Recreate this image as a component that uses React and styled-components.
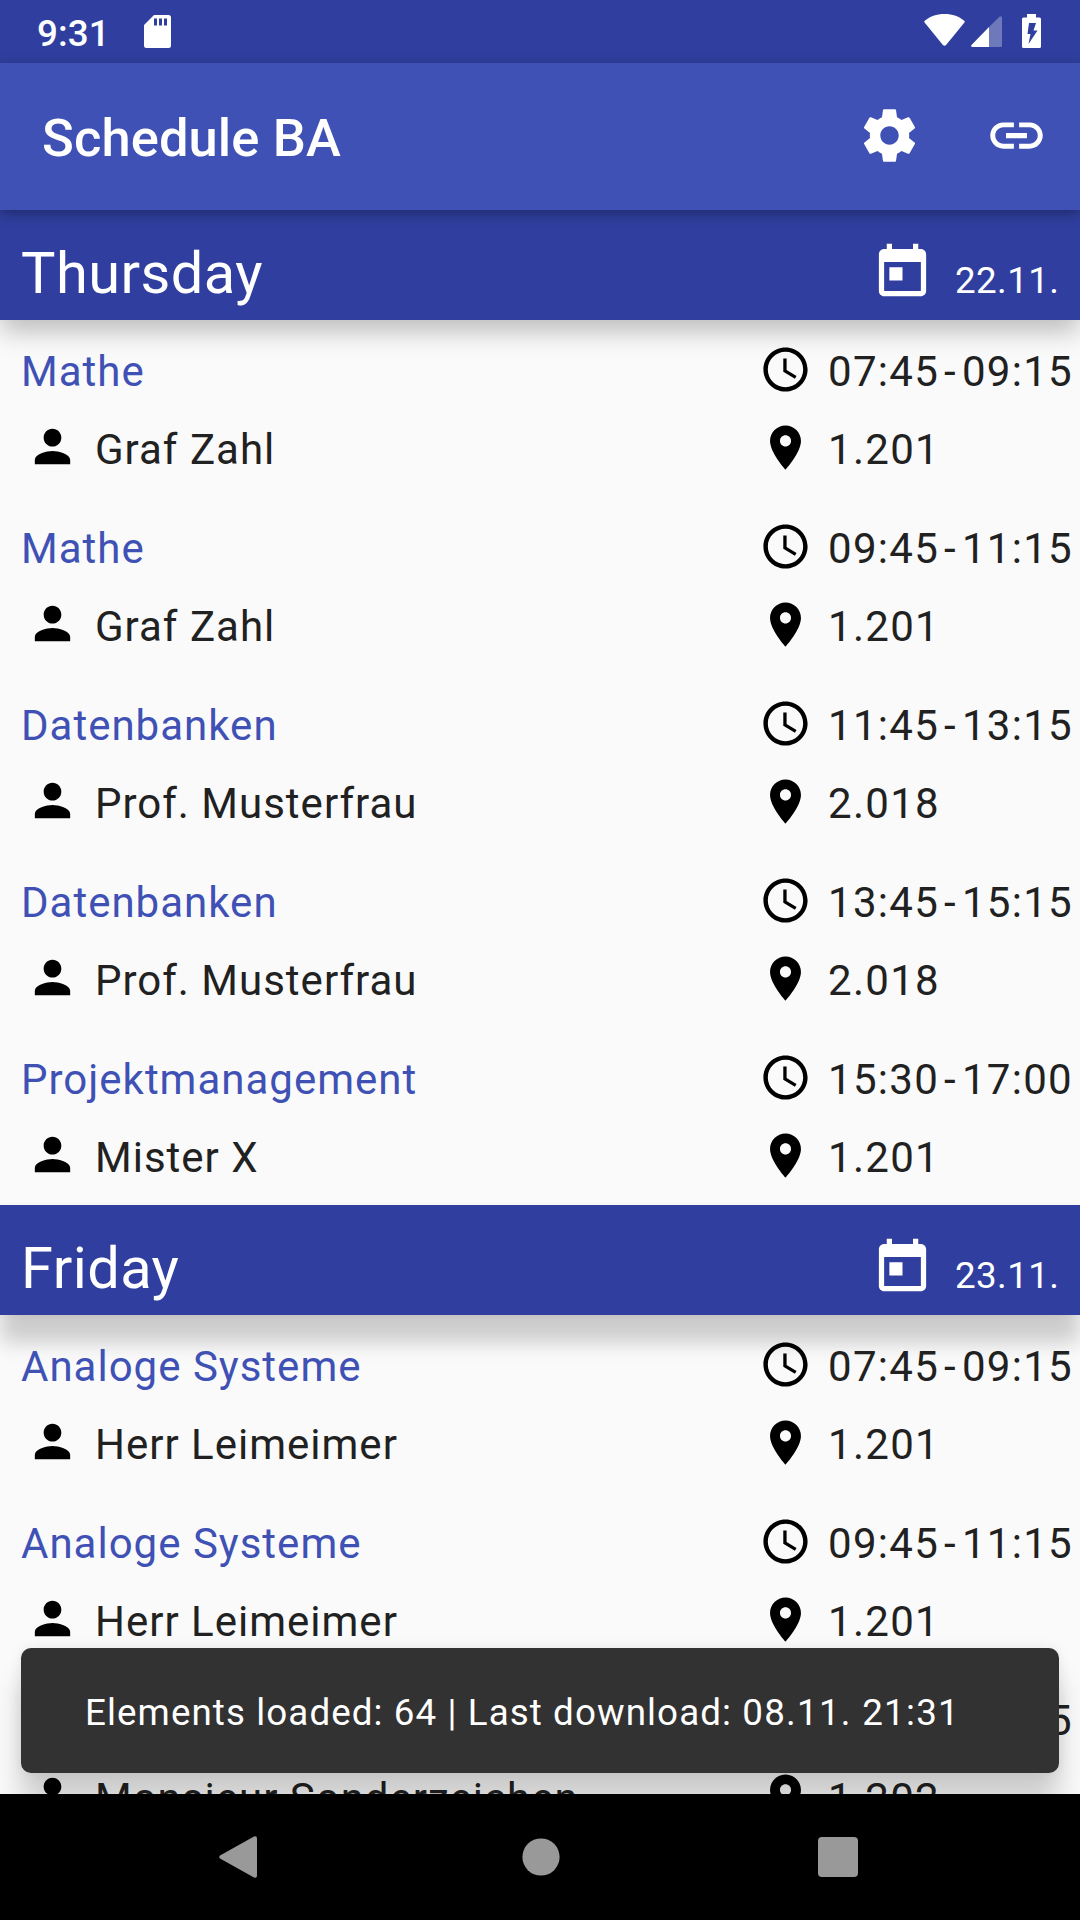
import React from 'react';
import styled, { createGlobalStyle } from 'styled-components';

const GlobalStyle = createGlobalStyle`
  *, *::before, *::after { box-sizing: border-box; }
  html, body { margin: 0; padding: 0; background: #000; }
  body { font-family: Roboto, "Noto Sans", sans-serif; }
`;

const Screen = styled.div`
  position: relative;
  display: flex;
  flex-direction: column;
  width: 1080px;
  height: 1920px;
  overflow: hidden;
  background: #fafafa;
`;

const StatusBar = styled.header`
  display: flex;
  align-items: flex-start;
  flex: 0 0 63px;
  height: 63px;
  padding: 0 39px 0 37px;
  background: #303f9f;
  color: #fff;
`;

const Clock = styled.span`
  flex: 1;
  display: flex;
  align-items: flex-start;
  gap: 34px;
  font-size: 36.75px;
  font-weight: 500;
  letter-spacing: 0.1px;
`;

const Time = styled.span`
  margin-top: 12px;
  line-height: 44px;
`;

const StatusIcons = styled.div`
  display: flex;
  align-items: flex-start;
  height: 34px;
  margin-top: 14px;
`;

const Glyph = styled.svg`
  display: block;
  flex: none;
  width: ${(p) => p.$w}px;
  height: ${(p) => p.$h || p.$w}px;
  margin-left: ${(p) => p.$left || 0}px;
  margin-top: ${(p) => p.$top || 0}px;
  fill: currentColor;
`;

const Toolbar = styled.nav`
  position: relative;
  z-index: 2;
  display: flex;
  align-items: center;
  flex: 0 0 147px;
  padding: 0 32px 0 42px;
  background: #3f51b5;
  color: #fff;
  box-shadow: 0 4px 12px rgba(0, 0, 0, 0.32);
`;

const Title = styled.h1`
  flex: 1;
  margin: 3.5px 0 0;
  font-size: 52.5px;
  line-height: 62px;
  font-weight: 500;
  letter-spacing: 0.1px;
`;

const Actions = styled.div`
  display: flex;
  gap: 64px;
  margin-bottom: 2px;
`;

const List = styled.main`
  flex: 1 1 0;
  min-height: 0;
  overflow: hidden;
`;

const DayHeader = styled.div`
  position: relative;
  display: flex;
  align-items: flex-start;
  height: 110px;
  padding: 0 21px;
  background: #303f9f;
  color: #fff;
  box-shadow: ${(p) => p.$shadow};
`;

const DayName = styled.h2`
  flex: 1;
  margin: 29px 0 0;
  font-size: 57.75px;
  line-height: 68px;
  font-weight: 400;
  letter-spacing: 0.45px;
`;

const DayDate = styled.span`
  width: 104px;
  margin: 49px 0 0 21px;
  font-size: 36.75px;
  line-height: 44px;
  letter-spacing: 0.4px;
  white-space: nowrap;
`;

const Lesson = styled.article`
  position: relative;
  display: grid;
  grid-template-columns: 1fr 321px;
  grid-template-rows: 78px 99px;
  height: 177px;
  font-size: 42px;
  line-height: 50px;
  letter-spacing: 1px;
  color: #212121;
  white-space: nowrap;
`;

const Subject = styled.div`
  padding: 27px 0 0 21px;
  color: #3f51b5;
`;

const Cell = styled.div`
  display: flex;
  align-items: flex-start;
  padding-left: ${(p) => p.$indent || 0}px;
`;

const CellIcon = styled(Glyph)`
  color: #000;
`;

const Label = styled.span`
  display: flex;
  margin: 27px 0 0 16px;
`;

const Figures = styled(Label)`
  letter-spacing: 1.29px;
`;

const Dash = styled.span`
  padding: 0 5px;
`;

const Snackbar = styled.div`
  position: absolute;
  z-index: 3;
  left: 21px;
  top: 1648px;
  display: flex;
  align-items: center;
  width: 1038px;
  height: 125px;
  padding: 3px 64px 0;
  border-radius: 10px;
  background: #323232;
  color: #fff;
  font-size: 36.75px;
  letter-spacing: 1.09px;
  white-space: pre;
  box-shadow: 0 31px 28px rgba(0, 0, 0, 0.18), 0 0 14px rgba(0, 0, 0, 0.08);
`;

const Stamp = styled.span`
  letter-spacing: 1.26px;
`;

const NavBar = styled.footer`
  position: relative;
  z-index: 4;
  display: flex;
  align-items: center;
  flex: 0 0 126px;
  padding-left: 219px;
  background: #000;
  color: #999;
`;

const PATHS = {
  settings:
    'M19.43 12.98c.04-.32.07-.64.07-.98s-.03-.66-.07-.98l2.11-1.65c.19-.15.24-.42.12-.64l-2-3.46c-.12-.22-.39-.3-.61-.22l-2.49 1c-.52-.4-1.08-.73-1.69-.98l-.38-2.65C14.46 2.18 14.25 2 14 2h-4c-.25 0-.46.18-.49.42l-.38 2.65c-.61.25-1.17.59-1.69.98l-2.49-1c-.23-.09-.49 0-.61.22l-2 3.46c-.13.22-.07.49.12.64l2.11 1.65c-.04.32-.07.65-.07.98s.03.66.07.98l-2.11 1.65c-.19.15-.24.42-.12.64l2 3.46c.12.22.39.3.61.22l2.49-1c.52.4 1.08.73 1.69.98l.38 2.65c.03.24.24.42.49.42h4c.25 0 .46-.18.49-.42l.38-2.65c.61-.25 1.17-.59 1.69-.98l2.49 1c.23.09.49 0 .61-.22l2-3.46c.12-.22.07-.49-.12-.64l-2.11-1.65zM12 15.5c-1.93 0-3.5-1.57-3.5-3.5s1.57-3.5 3.5-3.5 3.5 1.57 3.5 3.5-1.57 3.5-3.5 3.5z',
  link: 'M3.9 12c0-1.71 1.39-3.1 3.1-3.1h4V7H7c-2.76 0-5 2.24-5 5s2.24 5 5 5h4v-1.9H7c-1.71 0-3.1-1.39-3.1-3.1zM8 13h8v-2H8v2zm9-6h-4v1.9h4c1.71 0 3.1 1.39 3.1 3.1s-1.39 3.1-3.1 3.1h-4V17h4c2.76 0 5-2.24 5-5s-2.24-5-5-5z',
  today:
    'M19 3h-1V1h-2v2H8V1H6v2H5c-1.11 0-1.99.9-1.99 2L3 19c0 1.1.89 2 2 2h14c1.1 0 2-.9 2-2V5c0-1.1-.9-2-2-2zm0 16H5V8h14v11zM7 10h5v5H7z',
  clock:
    'M11.99 2C6.47 2 2 6.48 2 12s4.47 10 9.99 10C17.52 22 22 17.52 22 12S17.52 2 11.99 2zM12 20c-4.42 0-8-3.58-8-8s3.58-8 8-8 8 3.58 8 8-3.58 8-8 8zm.5-13H11v6l5.25 3.15.75-1.23-4.5-2.67z',
  place:
    'M12 2C8.13 2 5 5.13 5 9c0 5.25 7 13 7 13s7-7.75 7-13c0-3.87-3.13-7-7-7zm0 9.5c-1.38 0-2.5-1.12-2.5-2.5s1.12-2.5 2.5-2.5 2.5 1.12 2.5 2.5-1.12 2.5-2.5 2.5z',
  person:
    'M12 12c2.21 0 4-1.79 4-4s-1.79-4-4-4-4 1.79-4 4 1.79 4 4 4zm0 2c-2.67 0-8 1.34-8 4v2h16v-2c0-2.66-5.33-4-8-4z',
};

const Icon = ({ name, as: Base = Glyph, ...rest }) => (
  <Base viewBox="0 0 24 24" {...rest}>
    <path d={PATHS[name]} />
  </Base>
);

const DAYS = [
  {
    name: 'Thursday',
    date: '22.11.',
    shadow: '0 12px 24px -1px rgba(0, 0, 0, 0.25)',
    lessons: [
      ['Mathe', 'Graf Zahl', '07:45', '09:15', '1.201'],
      ['Mathe', 'Graf Zahl', '09:45', '11:15', '1.201'],
      ['Datenbanken', 'Prof. Musterfrau', '11:45', '13:15', '2.018'],
      ['Datenbanken', 'Prof. Musterfrau', '13:45', '15:15', '2.018'],
      ['Projektmanagement', 'Mister X', '15:30', '17:00', '1.201'],
    ],
  },
  {
    name: 'Friday',
    date: '23.11.',
    shadow: '0 28px 20px -1px rgba(0, 0, 0, 0.19), 0 1px 8px rgba(0, 0, 0, 0.04)',
    lessons: [
      ['Analoge Systeme', 'Herr Leimeimer', '07:45', '09:15', '1.201'],
      ['Analoge Systeme', 'Herr Leimeimer', '09:45', '11:15', '1.201'],
      ['', 'Monsieur Sonderzeichen', '11:45', '13:15', '1.202'],
    ],
  },
];

const LessonRow = ({ lesson: [subject, teacher, from, to, room] }) => (
  <Lesson>
    <Subject>{subject}</Subject>
    <Cell>
      <Icon as={CellIcon} name="clock" $w={53} $top={23} />
      <Figures>
        {from}
        <Dash>-</Dash>
        {to}
      </Figures>
    </Cell>
    <Cell $indent={26}>
      <Icon as={CellIcon} name="person" $w={53} $top={22} />
      <Label>{teacher}</Label>
    </Cell>
    <Cell>
      <Icon as={CellIcon} name="place" $w={53} $top={23} />
      <Figures>{room}</Figures>
    </Cell>
  </Lesson>
);

export default function App() {
  return (
    <>
      <GlobalStyle />
      <Screen>
        <StatusBar>
          <Clock>
            <Time>9:31</Time>
            <Glyph viewBox="0 0 27 33" $w={27} $h={33} $top={15}>
              <path
                fillRule="evenodd"
                d="M10 0H24.500Q27 0 27 2.500V30.500Q27 33 24.500 33H2.500Q0 33 0 30.500V10ZM10 3.500V10.500H13V3.500ZM15 3.500V10.500H18V3.500ZM20 3.500V10.500H23V3.500Z"
              />
            </Glyph>
          </Clock>
          <StatusIcons>
            <Glyph viewBox="0 0 41 32" $w={41} $h={32}>
              <path d="M20.500 0C12.600 0 5.600 2.600.500 7Q0 7.800.600 8.600L18.900 31Q20.500 32.400 22.100 31L40.400 8.600Q41 7.800 40.500 7C35.400 2.600 28.400 0 20.500 0Z" />
            </Glyph>
            <Glyph viewBox="0 0 31 31" $w={31} $h={31} $left={6} $top={2}>
              <path
                opacity="0.3"
                d="M18 11L28.500.700Q31-.800 31 2V29.500Q31 31 29.500 31H18Z"
              />
              <path d="M18 11V31H1Q-.500 30.500.500 29Z" />
            </Glyph>
            <Glyph viewBox="0 0 19 34" $w={19} $h={34} $left={20}>
              <path
                fillRule="evenodd"
                d="M5 0H14V3.500H17.500Q19 3.500 19 5V32.500Q19 34 17.500 34H1.500Q0 34 0 32.500V5Q0 3.500 1.500 3.500H5ZM7 9L5.500 20H8.500L6.500 30L15.500 16.500H11.500L14 9Z"
              />
            </Glyph>
          </StatusIcons>
        </StatusBar>
        <Toolbar>
          <Title>Schedule BA</Title>
          <Actions>
            <Icon name="settings" $w={63} />
            <Icon name="link" $w={63} />
          </Actions>
        </Toolbar>
        <List>
          {DAYS.map((day) => (
            <section key={day.name}>
              <DayHeader $shadow={day.shadow}>
                <DayName>{day.name}</DayName>
                <Icon name="today" $w={63} $top={31} />
                <DayDate>{day.date}</DayDate>
              </DayHeader>
              {day.lessons.map((lesson) => (
                <LessonRow key={lesson[2]} lesson={lesson} />
              ))}
            </section>
          ))}
        </List>
        <Snackbar>
          {'Elements loaded: 64 | Last download: '}
          <Stamp>08.11. 21:31</Stamp>
        </Snackbar>
        <NavBar>
          <Glyph viewBox="0 0 38 42" $w={38} $h={42}>
            <path d="M35 .400Q38-.600 38 2.500V39.500Q38 42.600 35 41.600L1 22.500Q-.500 21 1 19.500Z" />
          </Glyph>
          <Glyph viewBox="0 0 38 38" $w={38} $left={264.5}>
            <circle cx="19" cy="19" r="18.600" />
          </Glyph>
          <Glyph viewBox="0 0 40 40" $w={40} $left={258}>
            <rect width="40" height="40" rx="4" />
          </Glyph>
        </NavBar>
      </Screen>
    </>
  );
}
